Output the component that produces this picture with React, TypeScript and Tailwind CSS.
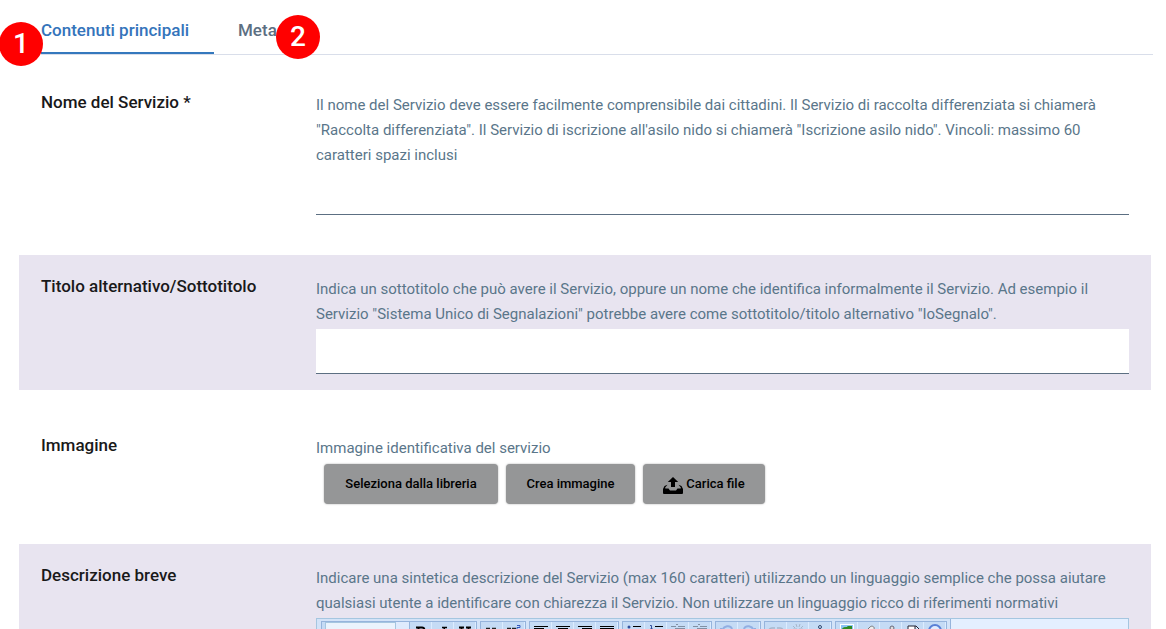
import type { ReactNode } from 'react';

const FONT = "font-['Roboto','Open_Sans',sans-serif]";

function Marker({ children, place }: { children: ReactNode; place: string }) {
  return (
    <span
      className={`absolute flex size-11 items-center justify-center rounded-full bg-[#ff0000] text-[28px] font-medium text-white ${place}`}
    >
      {children}
    </span>
  );
}

function Row({ label, htmlFor, help, shaded = false, children }: {
  label: string;
  htmlFor: string;
  help: string;
  shaded?: boolean;
  children: ReactNode;
}) {
  return (
    <section className={`flex px-[22px] pt-[22px] pb-4 ${shaded ? 'bg-[#e8e4f0]' : ''}`}>
      <label htmlFor={htmlFor} className="-mt-[3px] w-[275px] shrink-0 text-[17px] leading-6 font-medium text-[#19191a]">
        {label}
      </label>
      <div className="min-w-0 grow">
        <p id={`${htmlFor}-help`} className="mb-0.5 text-[15px] leading-[25px] text-[#5a768a]">
          {help}
        </p>
        {children}
      </div>
    </section>
  );
}

function TextField({ id }: { id: string }) {
  return (
    <input
      id={id}
      type="text"
      aria-describedby={`${id}-help`}
      className="block h-[45px] w-full border-b border-[#5c6f82] bg-white px-2 text-base outline-none"
    />
  );
}

const lines = (a: string) => <path d={a} stroke="#000" strokeWidth="1" fill="none" />;

const pic = (children: ReactNode) => (
  <svg viewBox="0 0 16 16" className="size-4">{children}</svg>
);

const STYLE_TOOLS: { name: string; icon: ReactNode }[] = [
  { name: 'Grassetto', icon: pic(<path d="M3 4.5h6c3 0 3 3.5 0 4 4 .5 3.5 5-.5 5H3M5.500 4.500v9" stroke="#000" strokeWidth="2" fill="none" />) },
  { name: 'Corsivo', icon: pic(<path d="M7 4.5h5M9.500 4.500l-2 9M5 13.500h5" stroke="#000" strokeWidth="1.5" fill="none" />) },
  { name: 'Sottolineato', icon: pic(<path d="M2 4.5h5M9 4.500h5M4.500 4v6c0 3 7 3 7 0V4M2 15h12" stroke="#000" strokeWidth="1.8" fill="none" />) },
];

const GROUPS: { name: string; icon: ReactNode }[][] = [
  [
    { name: 'Pedice', icon: pic(<><path d="M2 5.5h4M8 5.500h4M4 5.500l6 7M10 5.500l-6 7" stroke="#222" strokeWidth="1.5" fill="none" /><path d="M12 11h3v2h-3v2h3" stroke="#3355bb" fill="none" /></>) },
    { name: 'Apice', icon: pic(<><path d="M1 5.5h4M6 5.500h4M3 5.500l5 7M8 5.500l-5 7" stroke="#222" strokeWidth="1.5" fill="none" /><path d="M11 2.5h3v2h-3v2h3" stroke="#3355bb" fill="none" /></>) },
  ],
  [
    { name: 'Allinea a sinistra', icon: pic(lines('M1 3.5h14M1 5.5h10M1 8.5h14M1 11.5h10')) },
    { name: 'Allinea al centro', icon: pic(lines('M1 3.5h14M3 5.5h10M1 8.5h14M3 11.5h10')) },
    { name: 'Allinea a destra', icon: pic(lines('M1 3.5h14M5 5.5h10M1 8.5h14M5 11.5h10')) },
    { name: 'Giustifica', icon: pic(lines('M1 3.5h14M1 5.5h14M1 8.5h14M1 11.5h14')) },
  ],
  [
    { name: 'Elenco puntato', icon: pic(<><circle cx="3" cy="4" r="1.5" fill="#34509c" /><circle cx="3" cy="10" r="1.5" fill="#34509c" />{lines('M7 3.5h8M7 9.5h8')}</>) },
    { name: 'Elenco numerato', icon: pic(<><path d="M2 2.5h1.5V6M2 6h3M2 9.5h2v3H2" stroke="#34509c" fill="none" />{lines('M7 3.5h8M7 9.5h8')}</>) },
    { name: 'Riduci rientro', icon: pic(<path d="M6 1.5h2M1 3.5h5M8 3.5h7M5 5.5h10M5 7.5h10M1 10.5h14" stroke="#8290a3" />) },
    { name: 'Aumenta rientro', icon: pic(<path d="M6 1.5h2M1 3.5h5M8 3.5h7M5 5.5h10M5 7.5h10M1 10.5h14" stroke="#8290a3" />) },
  ],
  [
    { name: 'Annulla', icon: pic(<path d="M2 5v6h6M3 10C3 2 13 1 13 7c0 3-2 5-5 6" stroke="#92afe2" strokeWidth="2" fill="none" />) },
    { name: 'Ripristina', icon: pic(<path d="M14 5v6H8M13 10C13 2 3 1 3 7c0 3 2 5 5 6" stroke="#92afe2" strokeWidth="2" fill="none" />) },
  ],
  [
    { name: 'Inserisci collegamento', icon: pic(<path d="M7 5H4a3 3 0 0 0 0 6h3M9 5h3a3 3 0 0 1 0 6H9M5 8h6" stroke="#a6b6ca" strokeWidth="1.5" fill="none" />) },
    { name: 'Rimuovi collegamento', icon: pic(<path d="M7 6H4a3 3 0 0 0 0 6h3M9 6h3a3 3 0 0 1 0 6H9M6 1l1 3M10 1 9 4M3 3l2 2M13 3l-2 2" stroke="#a6b6ca" fill="none" />) },
    { name: 'Ancora', icon: pic(<><circle cx="8" cy="4" r="1.5" stroke="#344a70" fill="none" /><path d="M8 5v9M3 9c0 6 10 6 10 0M5 7h6" stroke="#344a70" fill="none" /></>) },
  ],
  [
    { name: 'Immagine', icon: pic(<><rect x="1.5" y="1.5" width="13" height="12" fill="#8bc5f5" stroke="#fff" /><path d="M3 6c2-3 4-1 6-3h4v3L10 8v4H6V8Z" fill="#2f8a20" /></>) },
    { name: 'Pulisci', icon: pic(<path d="m2 11 7-7c2-2 5 0 4 2l-7 7Z" fill="#eee" stroke="#777" />) },
    { name: 'Trova', icon: pic(<><circle cx="9" cy="5" r="2" fill="#ddd" stroke="#667" /><path d="m8 7-3 6" stroke="#667" /></>) },
    { name: 'Incolla', icon: pic(<path d="M3 3h8l3 3v8H3ZM10 3v4h4M5 8h6" fill="#fff" stroke="#223" />) },
    { name: 'Aiuto', icon: pic(<><circle cx="8" cy="8" r="6" fill="#e0ecff" stroke="#5a80d6" strokeWidth="2" /><path d="M6 8c0-2 5-2 4 0l-2 2v2" stroke="#315cc5" fill="none" /></>) },
  ],
];

function ToolButton({ name, children }: { name: string; children: ReactNode }) {
  return (
    <button
      type="button"
      aria-label={name}
      className="flex h-[22px] w-[22px] items-start justify-center border-r border-[#dcecff] bg-[#c5dbf5] pt-px"
    >
      {children}
    </button>
  );
}

const GROUP = 'flex border-t border-x border-[#96b4dc] bg-[#c5dbf5]';

function Editor() {
  return (
    <div className="border border-[#a5c6e0] bg-[#e4efff]">
      <div className="flex">
        <div className="flex gap-[3px] overflow-hidden border-r border-[#96b4dc] bg-[#d3e3f8] pt-0.5 pr-[3px] pl-1">
          <div className={`${GROUP} pl-[3px]`}>
            <select
              id="descrizione"
              aria-describedby="descrizione-help"
              className="h-[22px] w-[71px] appearance-none border border-[#a5c6e0] bg-[#eaf3fd] px-1 text-[11px] outline-none"
            >
              <option></option>
            </select>
            <button type="button" aria-label="Apri formati" className="h-[22px] w-[14px] border-r border-[#96b4dc] bg-[#dfebfd]" />
            {STYLE_TOOLS.map((tool) => (
              <ToolButton key={tool.name} name={tool.name}>{tool.icon}</ToolButton>
            ))}
          </div>
          {GROUPS.map((group) => (
            <div key={group[0].name} className={GROUP}>
              {group.map((tool) => (
                <ToolButton key={tool.name} name={tool.name}>{tool.icon}</ToolButton>
              ))}
            </div>
          ))}
        </div>
      </div>
      <div className="h-40 border-t border-[#a5c6e0] bg-white" />
    </div>
  );
}

const BUTTON =
  'flex h-10 items-center justify-center rounded bg-[#959697] text-[13px] font-medium text-black shadow-[0_0_2px_rgba(0,0,0,0.35)]';

export default function App() {
  return (
    <main className={`h-screen overflow-hidden bg-white pr-[15px] pl-[19px] ${FONT}`}>
      <nav className="-mr-0.5 ml-[22px] flex h-[55px] border-b border-[#d9deea]">
        <div className="relative">
          <a href="#contenuti" aria-current="page" className="block h-[54px] w-[173px] border-b-2 border-[#3478bd] pt-[18px] text-[17px] leading-6 font-medium whitespace-nowrap text-[#3474bb]">
            Contenuti principali
          </a>
          <Marker place="top-[22px] -left-[42px]">1</Marker>
        </div>
        <div className="relative ml-6">
          <a href="#metadati" className="block pt-[18px] text-[17px] leading-6 font-medium text-[#5c6f82]">
            Meta
          </a>
          <Marker place="top-[15px] left-[38px]">2</Marker>
        </div>
      </nav>
      <form className="flex flex-col gap-6 pt-4">
        <Row
          label="Nome del Servizio *"
          htmlFor="nome"
          help={'Il nome del Servizio deve essere facilmente comprensibile dai cittadini. Il Servizio di raccolta differenziata si chiamerà "Raccolta differenziata". Il Servizio di iscrizione all\'asilo nido si chiamerà "Iscrizione asilo nido". Vincoli: massimo 60 caratteri spazi inclusi'}
        >
          <TextField id="nome" />
        </Row>
        <Row
          label="Titolo alternativo/Sottotitolo"
          htmlFor="titolo"
          shaded
          help={'Indica un sottotitolo che può avere il Servizio, oppure un nome che identifica informalmente il Servizio. Ad esempio il Servizio "Sistema Unico di Segnalazioni" potrebbe avere come sottotitolo/titolo alternativo "IoSegnalo".'}
        >
          <TextField id="titolo" />
        </Row>
        <Row label="Immagine" htmlFor="immagine" help="Immagine identificativa del servizio">
          <div className="flex gap-2 pt-px pl-2">
            <button id="immagine" type="button" className={`${BUTTON} w-[174px]`}>Seleziona dalla libreria</button>
            <button type="button" className={`${BUTTON} w-[129px]`}>Crea immagine</button>
            <button type="button" className={`${BUTTON} w-[122px] gap-[3px]`}>
              <svg viewBox="0 0 20 17" className="mt-0.5 h-[17px] w-5" fill="#000">
                <path d="M10 0 4.8 5H8v5h4V5h3.200Z" />
                <path d="M4.500 7.800 1.500 9 0 12v4q0 1 1 1h18q1 0 1-1v-4l-1.500-3-3-1.200 2.300 2.700q.5 1-.5 1h-2.800L13 13.500H7L5.500 11.500H2.700q-1 0-.5-1Z" />
              </svg>
              Carica file
            </button>
          </div>
        </Row>
        <Row
          label="Descrizione breve"
          htmlFor="descrizione"
          shaded
          help="Indicare una sintetica descrizione del Servizio (max 160 caratteri) utilizzando un linguaggio semplice che possa aiutare qualsiasi utente a identificare con chiarezza il Servizio. Non utilizzare un linguaggio ricco di riferimenti normativi"
        >
          <Editor />
        </Row>
      </form>
    </main>
  );
}
